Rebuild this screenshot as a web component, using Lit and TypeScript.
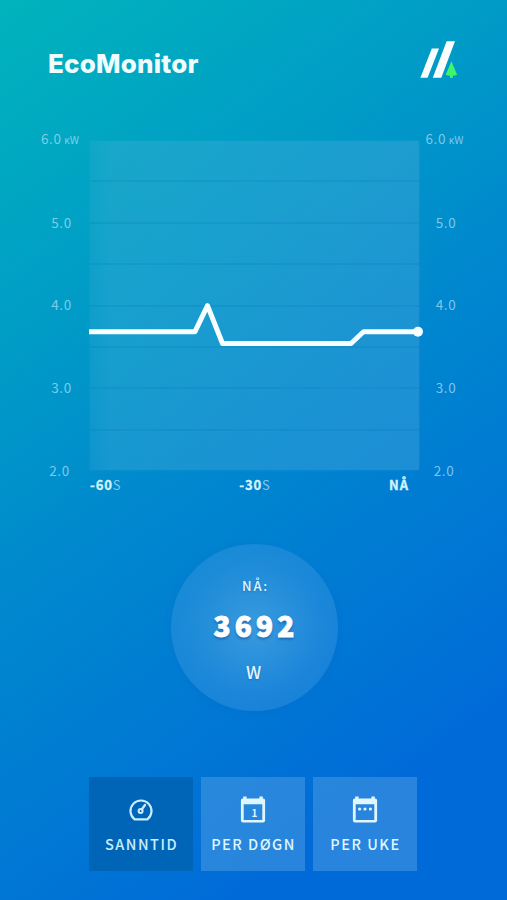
import { LitElement, html, css, svg } from "lit";
import { customElement, property, state } from "lit/decorators.js";

const gauge = svg`
  <path d="M7.6 23.3 A10.500 10.500 0 1 1 20.4 23.3 Z" fill="none" stroke="currentColor" stroke-width="2.2" stroke-linejoin="round"/>
  <circle cx="13.6" cy="14.9" r="2" fill="none" stroke="currentColor" stroke-width="2"/>
  <path d="M14.900 13.200 L18 9" stroke="currentColor" stroke-width="2.3" stroke-linecap="round"/>`;

const calendar = svg`
  <path fill="currentColor" fill-rule="evenodd" d="M4.200 0.6h3.400v2h12.800v-2h3.400v2h0.400a1.900 1.900 0 0 1 1.900 1.900v20a2.100 2.100 0 0 1-2.100 2.100H4a2.100 2.100 0 0 1-2.100-2.100V4.500a1.900 1.900 0 0 1 1.900-1.900h.4zM4.700 8.300v15.600h18.600V8.300z"/>`;

const dayIcon = svg`${calendar}<text x="15.4" y="20.6" text-anchor="middle" class="num">1</text>`;
const weekIcon = svg`${calendar}
  <g fill="currentColor"><circle cx="8.600" cy="13" r="1.600"/><circle cx="14" cy="13" r="1.600"/><circle cx="19.400" cy="13" r="1.600"/></g>`;

@customElement("power-chart")
class PowerChart extends LitElement {
  static styles = css`
    :host { display: grid; grid-template-columns: 57px 329px 57px; }
    .scale {
      display: flex; flex-direction: column; justify-content: space-between;
      height: 352px; margin-top: -13px; text-align: center; white-space: nowrap;
      font-size: 13.5px; line-height: 20px; letter-spacing: 0.6px;
      color: rgba(165, 222, 248, 0.75);
    }
    .left { margin-right: 3px; }
    .right { margin-right: 6px; }
    .unit { font-size: 10.5px; letter-spacing: 0; margin-left: -1px; }
    .mid { padding-left: 3px; margin: -1px 0 1px; }
    .low { padding-right: 1px; }
    .plot { position: relative; height: 329px; }
    .panel {
      display: flex; flex-direction: column; height: 329px;
      background: linear-gradient(90deg, rgba(70, 175, 216, 0.2), rgba(70, 175, 216, 0.33) 6%, rgba(80, 170, 220, 0.36));
      box-shadow: 0 0 3px rgba(70, 175, 216, 0.25);
    }
    .band { flex: 1; border-bottom: 2px solid rgba(0, 110, 180, 0.16); box-sizing: border-box; }
    .band:last-child { border: 0; }
    .line { position: absolute; inset: 0; overflow: visible; }
    .times {
      grid-column: 2; display: grid; grid-template-columns: 1fr 1fr 1fr;
      font-size: 13px; line-height: 20px; font-weight: 700; letter-spacing: 0.9px;
      color: #d5f3ff; margin-top: -5px; -webkit-text-stroke: 0.3px #d5f3ff;
    }
    .times span:nth-child(2) { text-align: center; }
    .times span:nth-child(3) { text-align: right; padding-right: 10px; }
    .times .sec {
      font-style: normal; font-weight: 400; letter-spacing: 0;
      color: rgba(165, 222, 248, 0.8); -webkit-text-stroke: 0;
    }
  `;
  scale(side: string) {
    return html`<div class="scale ${side}">
      <div>6.0 <span class="unit">ĸW</span></div>
      <div class="mid">5.0</div><div class="mid">4.0</div><div class="mid">3.0</div>
      <div class="low">2.0</div>
    </div>`;
  }
  render() {
    return html`
      ${this.scale("left")}
      <div class="plot">
        <div class="panel">${Array.from({ length: 8 }, () => html`<div class="band"></div>`)}</div>
        <svg class="line" width="329" height="329">
          <path d="M-1 190.700H105L117.500 164.700L132.500 202.500H261L273.500 190.700H328" fill="none" stroke="#f6feff" stroke-width="5" stroke-linejoin="round"/>
          <circle cx="328" cy="190.700" r="5" fill="#f6feff"/>
        </svg>
      </div>
      ${this.scale("right")}
      <div class="times">
        <span>-60<i class="sec">S</i></span>
        <span>-30<i class="sec">S</i></span>
        <span>NÅ</span>
      </div>`;
  }
}

@customElement("app-root")
class AppRoot extends LitElement {
  @property({ type: Number }) watts = 3692;
  @state() active = 0;

  static styles = css`
    :host {
      display: flex; flex-direction: column; align-items: center;
      box-sizing: border-box; width: 507px; height: 900px; overflow: hidden;
      font-family: "Noto Sans CJK JP", "Noto Sans", sans-serif;
      background: linear-gradient(144deg, #00b4bc 0%, #009bc7 29%, #0088ce 48%, #0078d4 69%, #006bd8 84%, #006bd8 100%);
    }
    header {
      display: flex; justify-content: space-between; align-items: flex-start;
      box-sizing: border-box; width: 507px; height: 141px; padding: 41px 49px 0 48px;
    }
    h1 {
      margin: 6px 0 0; font: 800 26px/34px "Inter", sans-serif; letter-spacing: 0.2px; color: #effdff;
    }
    power-chart { margin-left: 2px; height: 343px; }
    .now {
      display: flex; flex-direction: column; align-items: center; box-sizing: border-box;
      width: 167px; height: 167px; margin: 60px 0 0 2px; padding-top: 32px; border-radius: 50%;
      background: radial-gradient(circle, rgba(95, 175, 230, 0.6) 0%, rgba(80, 160, 228, 0.36) 55%, rgba(70, 155, 225, 0.22) 100%);
      box-shadow: 0 2px 8px rgba(0, 80, 180, 0.12); color: #e2f6ff;
      text-shadow: 0 1px 2px rgba(0, 50, 120, 0.3);
    }
    .cap { font-size: 13px; line-height: 20px; font-weight: 500; letter-spacing: 1.8px; margin-left: 2px; }
    .value {
      font-size: 28px; line-height: 36px; font-weight: 900; letter-spacing: 4.2px; margin: 11px -3px 0 0;
      color: #fff; -webkit-text-stroke: 0.9px #fff; text-shadow: 0 2px 3px rgba(0, 40, 110, 0.45);
    }
    .watt { font-size: 17px; line-height: 24px; font-weight: 500; margin: 17px 2px 0 0; }
    nav { display: flex; gap: 8px; margin: 66px 1px 0 0; }
    button {
      display: flex; flex-direction: column; align-items: center; box-sizing: border-box;
      width: 104px; height: 94px; padding: 19px 0 0; border: 0; white-space: nowrap;
      background: rgba(80, 158, 226, 0.5); color: #dff6ff;
      font: 500 14.500px/22px "Noto Sans CJK JP", "Noto Sans", sans-serif; letter-spacing: 1.500px;
    }
    button.active { background: #0065b7; color: #c8eeff; }
    .label { margin-top: 9px; padding-left: 1px; }
    .num { font: 700 10px "Noto Sans CJK JP", sans-serif; fill: currentColor; letter-spacing: 0; }
  `;
  render() {
    const tabs = [
      { label: "SANNTID", icon: gauge },
      { label: "PER DØGN", icon: dayIcon },
      { label: "PER UKE", icon: weekIcon },
    ];
    return html`
      <header>
        <h1>EcoMonitor</h1>
        <svg width="38" height="38" viewBox="420 41 38 38">
          <path fill="#fafeff" d="M431.800 48.400h7.200L427.600 77.800h-7.200zM446.600 41.200h8.400L441.300 77.800h-8.500z"/>
          <path fill="#3ef56b" d="M451.400 61.200l5.700 13.500q-2 1-4.300 1v2.300h-2.800v-2.300q-2.300 0-4.300-1z"/>
        </svg>
      </header>
      <power-chart></power-chart>
      <section class="now">
        <div class="cap">NÅ:</div>
        <div class="value">${this.watts}</div>
        <div class="watt">W</div>
      </section>
      <nav>
        ${tabs.map((t, i) => html`
          <button class=${i === this.active ? "active" : ""} @click=${() => (this.active = i)}>
            <svg width="28" height="28" viewBox="0 0 28 28">${t.icon}</svg>
            <span class="label">${t.label}</span>
          </button>`)}
      </nav>`;
  }
}
